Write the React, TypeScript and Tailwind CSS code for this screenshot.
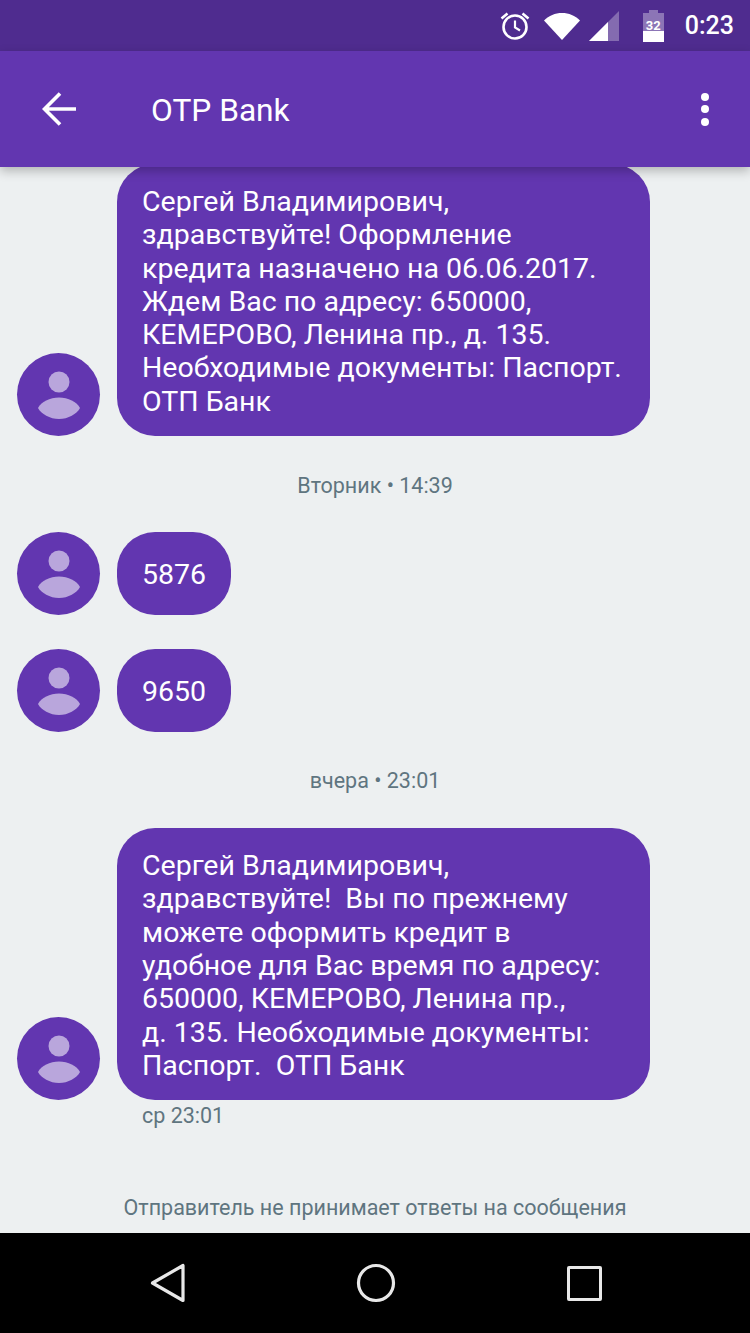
const font = { fontFamily: "Roboto, sans-serif" };

function StatusIcons() {
  return (
    <div className="flex items-center">
      {/* alarm */}
      <svg width="32" height="32" viewBox="0 0 32 32" className="mr-[12px]" fill="none" stroke="#fff">
        <circle cx="16" cy="17" r="11.500" strokeWidth="2.600" />
        <path d="M16 10.500v7l5 3" strokeWidth="2.200" />
        <path d="M2.500 8.500 8.500 3.500M29.500 8.500l-6-5" strokeWidth="2.600" />
      </svg>
      {/* wifi */}
      <svg width="38" height="30" viewBox="0 0 38 30" className="mr-[7px]">
        <path d="M1 9.500C6 4.500 12 2 19 2s13 2.500 18 7.500L19 29Z" fill="#fff" />
      </svg>
      {/* signal */}
      <svg width="32" height="32" viewBox="0 0 32 32" className="mr-[23px]">
        <path d="M1 31 31 1v30Z" fill="#fff" fillOpacity="0.3" />
        <path d="M1 31 20 12v19Z" fill="#fff" />
      </svg>
      {/* battery */}
      <div className="relative mr-[21px] h-[32px] w-[21px]">
        <svg width="21" height="32" viewBox="0 0 21 32">
          <path d="M6 0h9v3h6v29H0V3h6Z" fill="#fff" fillOpacity="0.35" />
          <path d="M0 21h21v11H0Z" fill="#fff" />
        </svg>
        <span className="absolute inset-x-0 top-[9px] text-center text-[13px] leading-[14px] font-bold text-white" style={font}>
          32
        </span>
      </div>
      <span className="text-[25px] leading-none font-medium text-white" style={font}>0:23</span>
    </div>
  );
}

function Avatar() {
  return (
    <div className="flex h-[83px] w-[83px] shrink-0 items-center justify-center rounded-full bg-[#6236b0]">
      <svg width="42" height="48" viewBox="0 0 42 48" fill="#b9a6dc">
        <circle cx="21" cy="11" r="10.500" />
        <path d="M0 37C3 31 12 26.500 21 26.500S39 31 42 37C39 43 30 48 21 48S3 43 0 37Z" />
      </svg>
    </div>
  );
}

function Bubble({ children, wide }: { children: React.ReactNode; wide?: boolean }) {
  return (
    <div className="flex items-end gap-[17px] pl-[17px]">
      <Avatar />
      <div
        className={
          wide
            ? "w-[533px] rounded-[38px] bg-[#6236b0] px-[25px] pt-[21px] pb-[18px] text-[28.500px] leading-[33.300px] whitespace-pre text-white"
            : "flex h-[83px] w-[114px] items-center justify-center rounded-[38px] bg-[#6236b0] pt-[4px] text-[28.500px] text-white"
        }
      >
        {children}
      </div>
    </div>
  );
}

function Stamp({ children }: { children: React.ReactNode }) {
  return <div className="text-center text-[21.500px] leading-[26px] text-[#5f7580]">{children}</div>;
}

export default function App() {
  return (
    <div className="flex h-[1333px] w-[750px] flex-col overflow-hidden bg-[#edf0f1]" style={font}>
      <div className="flex h-[51px] shrink-0 items-center justify-end bg-[#4f2c8f] pr-[16px]">
        <StatusIcons />
      </div>

      <header className="relative z-10 flex h-[116px] shrink-0 items-center bg-[#6236b0] pr-[41px] pl-[42px] shadow-[0_4px_10px_rgba(0,0,0,0.25)]">
        <svg width="34" height="34" viewBox="0 0 34 34" fill="none" stroke="#fff" strokeWidth="3.600">
          <path d="M34 17H3M18 1.500 2.500 17 18 32.500" />
        </svg>
        <h1 className="ml-[75px] flex-1 pt-[3px] text-[31.700px] font-normal text-white">OTP Bank</h1>
        <div className="flex flex-col gap-[4.500px]">
          <span className="h-[8px] w-[8px] rounded-full bg-white" />
          <span className="h-[8px] w-[8px] rounded-full bg-white" />
          <span className="h-[8px] w-[8px] rounded-full bg-white" />
        </div>
      </header>

      <main className="flex flex-1 flex-col overflow-hidden">
        <div className="-mt-[3px]">
          <Bubble wide>
            {"Сергей Владимирович,\nздравствуйте! Оформление\nкредита назначено на 06.06.2017.\nЖдем Вас по адресу: 650000,\nКЕМЕРОВО, Ленина пр., д. 135.\nНеобходимые документы: Паспорт.\nОТП Банк"}
          </Bubble>
        </div>
        <div className="mt-[37px] mb-[33px]"><Stamp>Вторник • 14:39</Stamp></div>
        <Bubble>5876</Bubble>
        <div className="h-[34px]" />
        <Bubble>9650</Bubble>
        <div className="mt-[36px] mb-[34px]"><Stamp>вчера • 23:01</Stamp></div>
        <Bubble wide>
          {"Сергей Владимирович,\nздравствуйте!  Вы по прежнему\nможете оформить кредит в\nудобное для Вас время по адресу:\n650000, КЕМЕРОВО, Ленина пр.,\nд. 135. Необходимые документы:\nПаспорт.  ОТП Банк"}
        </Bubble>
        <div className="mt-[3px] pl-[142px] text-[21.500px] leading-[26px] text-[#5f7580]">ср 23:01</div>
        <div className="mt-[66px]"><Stamp>Отправитель не принимает ответы на сообщения</Stamp></div>
      </main>

      <nav className="flex h-[100px] shrink-0 items-center bg-black pl-[150px]">
        <svg width="36" height="40" viewBox="0 0 36 40" fill="none" stroke="#e8e8e8" strokeWidth="3.200" strokeLinejoin="round">
          <path d="M2.500 20 33 2.500v35Z" />
        </svg>
        <svg width="40" height="40" viewBox="0 0 40 40" fill="none" stroke="#e8e8e8" strokeWidth="3.200" className="ml-[170px]">
          <circle cx="20" cy="20" r="17.500" />
        </svg>
        <div className="ml-[171px] h-[35px] w-[35px] rounded-[2px] border-[3.200px] border-[#e8e8e8]" />
      </nav>
    </div>
  );
}
